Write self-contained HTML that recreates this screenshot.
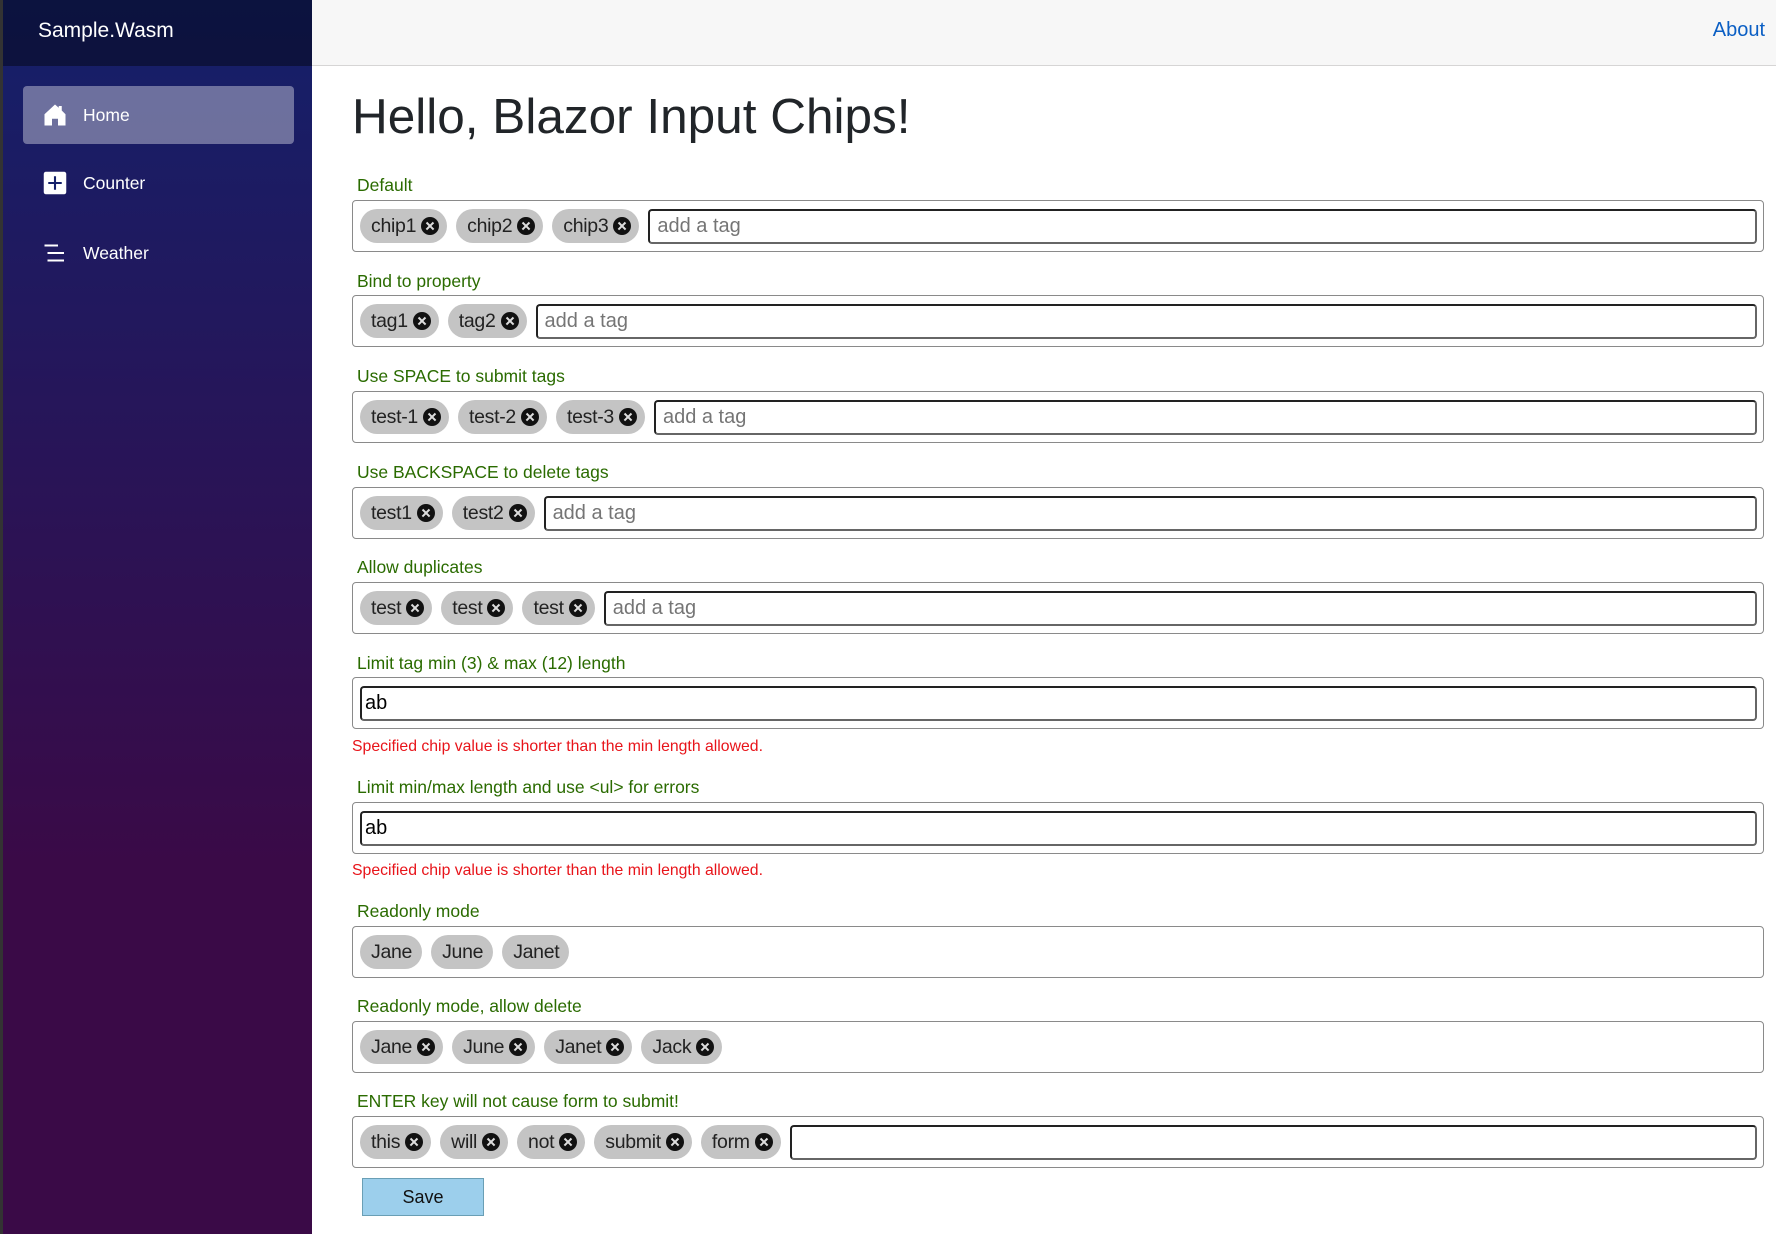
<!DOCTYPE html>
<html><head><meta charset="utf-8"><style>
*{box-sizing:border-box;margin:0;padding:0}
body{width:1776px;height:1234px;overflow:hidden;font-family:"Liberation Sans",Arial,sans-serif;background:#fff;position:relative}
.side{position:absolute;left:0;top:0;width:312px;height:1234px;background:linear-gradient(180deg,#14206a 0%,#3a0a47 70%,#3a0a47 100%);border-left:3px solid #333}
.brand{height:66px;background:rgba(0,0,0,.4);color:#fff;font-size:21px;padding-left:35px;line-height:62px}
.nav{position:absolute;left:20px;width:271px;height:58px;border-radius:4px;color:#fff;font-size:17.5px;display:flex;align-items:center;padding-left:60px}
.nav svg{position:absolute;left:20px}
.top{position:absolute;left:312px;top:0;right:0;height:66px;background:#f7f7f7;border-bottom:1px solid #d6d5d5}
.about{position:absolute;right:11px;top:19px;color:#0b5fc4;font-size:20px}
h1{position:absolute;left:352px;top:88px;font-size:49.5px;font-weight:400;color:#212529}
.lbl{position:absolute;left:357px;color:#2a6b00;font-size:17.5px;line-height:20px}
.box{position:absolute;left:352px;width:1412px;height:52px;border:1px solid #8a8a8a;border-radius:4px;display:flex;align-items:center;padding-left:7px}
.chip{height:34px;border-radius:17px;background:#c4c4c4;font-size:19.5px;color:#222;display:flex;align-items:center;padding:0 8px 0 11px;margin-right:9px;white-space:nowrap;letter-spacing:-0.3px}
.x{width:18px;height:18px;border-radius:50%;background:#111;margin-left:5px;position:relative;display:inline-block}
.x:before,.x:after{content:"";position:absolute;left:4px;top:8px;width:10px;height:2.2px;background:#ddd;transform:rotate(45deg)}
.x:after{transform:rotate(-45deg)}
.inp{flex:1;height:35px;border:2px solid #222;border-bottom-color:#666;border-right-color:#666;border-radius:4px;margin-right:6px;font-size:20px;color:#757575;padding-left:7px;display:flex;align-items:center}
.inp.v{color:#000;padding-left:3px}
.err{position:absolute;left:352px;color:#e8141a;font-size:15.8px}
.save{position:absolute;left:362px;top:1178px;width:122px;height:38px;background:#9ccfec;border:1px solid #6a9fb5;font-size:18px;color:#111;text-align:center;line-height:36px}
</style></head><body>
<div class="side">
<div class="brand">Sample.Wasm</div>
<div class="nav" style="top:86px;background:rgba(255,255,255,.37)"><svg width="24" height="24" viewBox="0 0 16 16"><path fill="#fff" d="M8 1 1 7.5V15h5v-4.5h4V15h5V7.5L12.5 5V2h-2v1.2z"/></svg>Home</div>
<div class="nav" style="top:154px"><svg width="24" height="24" viewBox="0 0 16 16"><rect x="0.5" y="0.5" width="15" height="15" rx="1.5" fill="#fff"/><path d="M8 3.5v9M3.5 8h9" stroke="#14206a" stroke-width="1.4"/></svg>Counter</div>
<div class="nav" style="top:224px"><svg width="24" height="24" viewBox="0 0 16 16"><path d="M1 3h9M3 8h11M3 13h11" stroke="#fff" stroke-width="1.3"/></svg>Weather</div>
</div>
<div class="top"><span class="about">About</span></div>
<h1>Hello, Blazor Input Chips!</h1>

<div class="lbl" style="top:175px">Default</div>
<div class="box" style="top:200px"><span class="chip">chip1<i class="x"></i></span><span class="chip">chip2<i class="x"></i></span><span class="chip">chip3<i class="x"></i></span><div class="inp">add a tag</div></div>

<div class="lbl" style="top:271px">Bind to property</div>
<div class="box" style="top:295px"><span class="chip">tag1<i class="x"></i></span><span class="chip">tag2<i class="x"></i></span><div class="inp">add a tag</div></div>

<div class="lbl" style="top:366px">Use SPACE to submit tags</div>
<div class="box" style="top:391px"><span class="chip">test-1<i class="x"></i></span><span class="chip">test-2<i class="x"></i></span><span class="chip">test-3<i class="x"></i></span><div class="inp">add a tag</div></div>

<div class="lbl" style="top:462px">Use BACKSPACE to delete tags</div>
<div class="box" style="top:487px"><span class="chip">test1<i class="x"></i></span><span class="chip">test2<i class="x"></i></span><div class="inp">add a tag</div></div>

<div class="lbl" style="top:557px">Allow duplicates</div>
<div class="box" style="top:582px"><span class="chip">test<i class="x"></i></span><span class="chip">test<i class="x"></i></span><span class="chip">test<i class="x"></i></span><div class="inp">add a tag</div></div>

<div class="lbl" style="top:653px">Limit tag min (3) &amp; max (12) length</div>
<div class="box" style="top:677px"><div class="inp v">ab</div></div>
<div class="err" style="top:738px">Specified chip value is shorter than the min length allowed.</div>

<div class="lbl" style="top:777px">Limit min/max length and use &lt;ul&gt; for errors</div>
<div class="box" style="top:802px"><div class="inp v">ab</div></div>
<div class="err" style="top:862px">Specified chip value is shorter than the min length allowed.</div>

<div class="lbl" style="top:901px">Readonly mode</div>
<div class="box" style="top:926px"><span class="chip" style="padding-right:10px">Jane</span><span class="chip" style="padding-right:10px">June</span><span class="chip" style="padding-right:10px">Janet</span></div>

<div class="lbl" style="top:996px">Readonly mode, allow delete</div>
<div class="box" style="top:1021px"><span class="chip">Jane<i class="x"></i></span><span class="chip">June<i class="x"></i></span><span class="chip">Janet<i class="x"></i></span><span class="chip">Jack<i class="x"></i></span></div>

<div class="lbl" style="top:1091px">ENTER key will not cause form to submit!</div>
<div class="box" style="top:1116px"><span class="chip">this<i class="x"></i></span><span class="chip">will<i class="x"></i></span><span class="chip">not<i class="x"></i></span><span class="chip">submit<i class="x"></i></span><span class="chip">form<i class="x"></i></span><div class="inp"></div></div>

<div class="save">Save</div>
</body></html>
